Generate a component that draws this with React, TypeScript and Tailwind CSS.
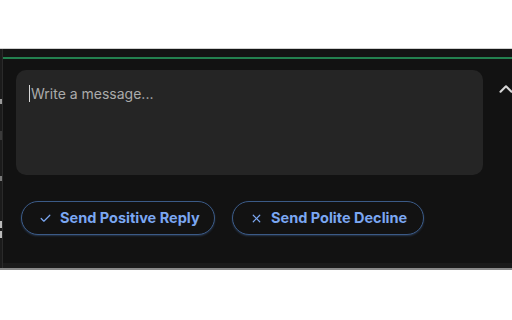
import React from 'react';
import { Check, X, ChevronUp } from 'lucide-react';

const actions = [
  { label: 'Send Positive Reply', icon: Check, width: 'w-[194px]' },
  { label: 'Send Polite Decline', icon: X, width: 'w-[192px]' },
];

export default function App() {
  return (
    <div
      className="w-[512px] h-[320px] bg-white flex flex-col overflow-hidden"
      style={{ fontFamily: 'Inter, "Noto Sans", sans-serif' }}
    >
      <div className="h-[49px] bg-white border-b border-[#d0d0d0]" />

      <div className="flex h-[219px] bg-[#121212]">
        {/* edge of the neighbouring panel */}
        <div className="w-[3px] bg-[#1b1b1b] border-r border-[#2a2a2a] flex flex-col">
          <div className="h-[50px]" />
          <div className="h-[5px] w-[2px] bg-[#9a9a9a]" />
          <div className="h-[27px]" />
          <div className="h-[9px] w-[2px] bg-[#3a3a3a]" />
          <div className="h-[36px]" />
          <div className="h-[5px] w-[2px] bg-[#7a7a7a]" />
          <div className="h-[40px]" />
          <div className="h-[7px] w-[2px] bg-[#bbbbbb]" />
          <div className="h-[3px]" />
          <div className="h-[7px] w-[2px] bg-[#bbbbbb]" />
        </div>

        <div className="flex-1 flex flex-col">
          <div className="h-[8px] bg-[#141414]" />
          <div className="h-[2px] bg-[#23814f]" />

          <div className="flex pt-[11px] pl-[13px]">
            <div className="w-[467px] h-[105px] rounded-[10px] bg-[#252525] pl-[13px] pt-[13px]">
              <div className="flex items-center text-[14px] text-[#ababab]">
                <span className="w-px h-[17px] bg-[#d8d8d8] mr-px" />
                Write a message...
              </div>
            </div>
            <div className="flex-1 flex pt-[8px] pl-[12px]">
              <ChevronUp className="w-[22px] h-[22px] shrink-0 text-[#d6d6d6]" strokeWidth={2.3} />
            </div>
          </div>

          <div className="flex gap-[17px] pl-[18px] pt-[26px]">
            {actions.map((a) => {
              const Icon = a.icon;
              return (
                <button
                  key={a.label}
                  className={`${a.width} h-[34px] rounded-full border border-[#3b5a86] bg-[#121212] shadow-[0_1px_2px_rgba(59,90,134,0.5)] flex items-center gap-[8px] pl-[17px] text-[14.5px] font-bold text-[#7ba7f2]`}
                >
                  <Icon className="w-[13px] h-[13px]" strokeWidth={2.2} />
                  {a.label}
                </button>
              );
            })}
          </div>

          <div className="flex-1" />
          <div className="h-[5px] bg-[#1a1a1a]" />
        </div>
      </div>

      <div className="h-[2px] bg-[#8a8a8a]" />
      <div className="flex-1 bg-white" />
    </div>
  );
}
